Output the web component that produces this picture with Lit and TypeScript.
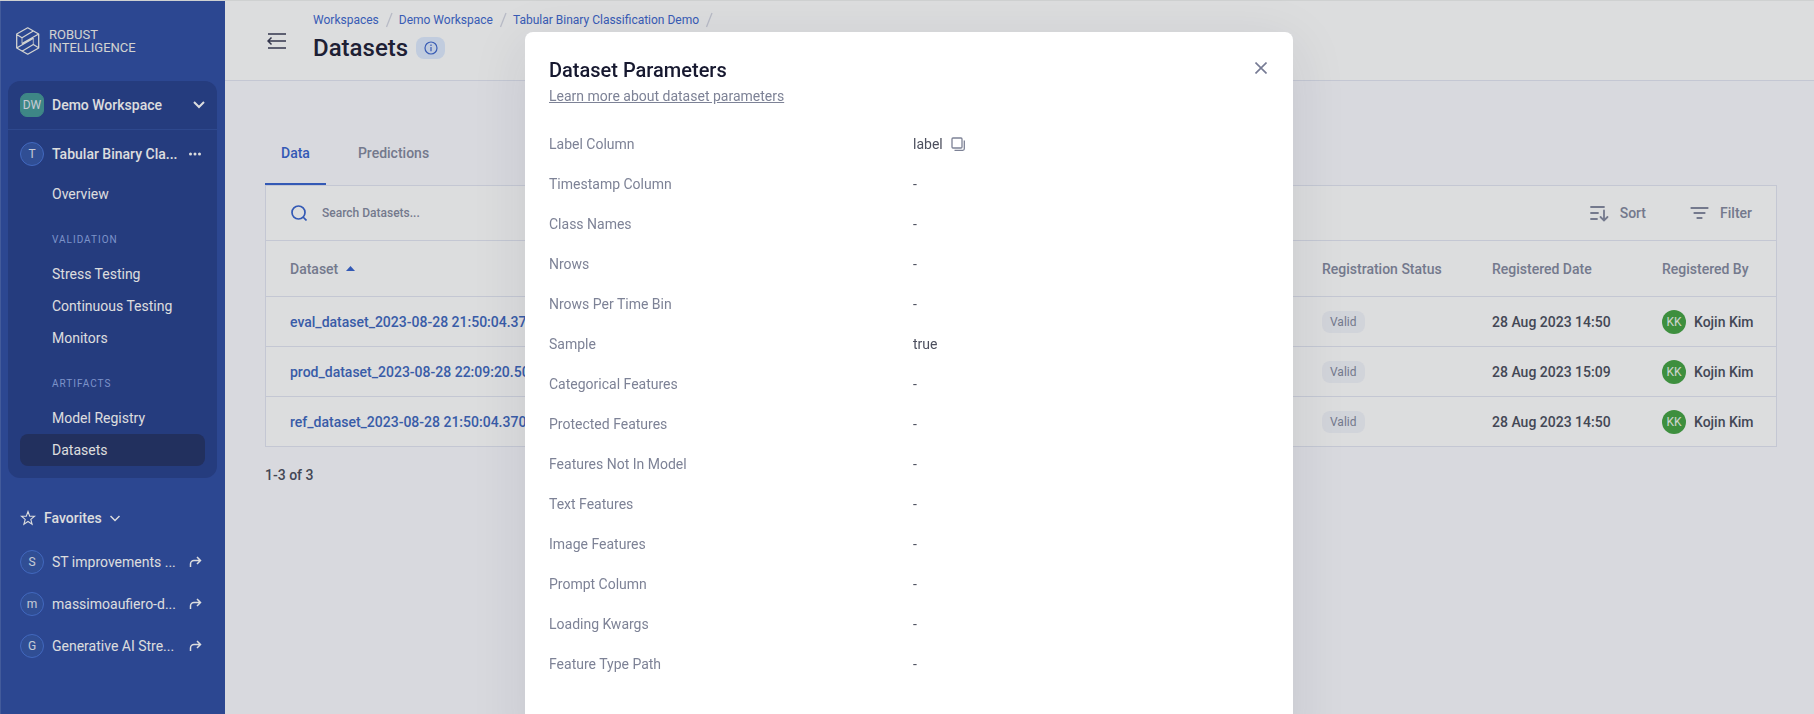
import { LitElement, html, css, svg } from "lit";
import { customElement } from "lit/decorators.js";
import { classMap } from "lit/directives/class-map.js";

const shared = css`
  * { box-sizing: border-box; }
  :host { box-sizing: border-box; font-family: Roboto, "Liberation Sans", sans-serif; font-size: 14px; line-height: 20px; }
  a { color: inherit; text-decoration: none; }
  button { font: inherit; color: inherit; background: none; border: 0; padding: 0; margin: 0; cursor: pointer; }
  svg { display: block; flex: none; fill: none; stroke: currentColor; }
  h1, h2, p, ul, dl, dd, dt { margin: 0; padding: 0; }
  ul { list-style: none; }
`;

const shareArrow = svg`<path d="M1.500 11V8a3.500 3.500 0 0 1 3.500-3.500h6M8 1l3.500 3.500L8 8" stroke-width="1.500"/>`;

@customElement("app-sidebar")
export class AppSidebar extends LitElement {
  static styles = [shared, css`
    :host { display: block; flex: none; width: 225px; min-height: 100%; padding: 0 8px 0 7px; background: #314fa5; border-left: 1px solid #4c67b1; color: #fff; }
    .brand { display: flex; align-items: center; gap: 9px; height: 80px; padding: 0 8px; font-size: 13px; line-height: 13px; color: #f4f4f0; }
    .panel { background: #29428f; border-radius: 12px; padding-bottom: 12px; }
    .row { display: flex; align-items: center; width: 100%; height: 48px; padding: 0 12px; text-align: left; font-weight: 500; }
    .workspace { height: 49px; border-bottom: 1px solid #3350a0; }
    .name { flex: 1; padding-left: 8px; white-space: nowrap; }
    .avatar { flex: none; display: grid; place-items: center; width: 24px; height: 24px; border: 1px solid #4a76da; border-radius: 12px; background: #3558a9; font-size: 12px; font-weight: 400; line-height: 16px; color: #e4e9f4; }
    .square { border-radius: 7px; border-color: #469b98; background: #469b98; }
    .link { display: flex; align-items: center; height: 32px; margin: 0 12px; padding-left: 32px; border-radius: 8px; }
    .active { background: #253469; }
    .label { padding: 22px 0 10px 44px; font-size: 10px; line-height: 16px; letter-spacing: 1px; font-weight: 400; color: #8fa9e6; }
    .favhead { display: flex; align-items: center; gap: 8px; padding: 0 12px; height: 24px; margin-top: 28px; font-weight: 500; }
    .favs { display: grid; gap: 18px; margin-top: 20px; }
    .fav { display: flex; align-items: center; padding: 0 15px 0 12px; }
  `];

  private link(text: string, active = false) {
    return html`<a href="#" class=${classMap({ link: true, active })}>${text}</a>`;
  }

  private favorite(initial: string, text: string) {
    return html`<li><a href="#" class="fav"><span class="avatar">${initial}</span><span class="name">${text}</span>
      <svg width="13" height="12" viewBox="0 0 13 12">${shareArrow}</svg></a></li>`;
  }

  render() {
    return html`
      <div class="brand">
        <svg width="24" height="28" viewBox="0 0 24 28" stroke-width="1.300" stroke-linejoin="round">
          <path d="M11.700 .8 22.700 7v14L11.700 27.200.7 21V7ZM.7 7.500l5.300 3.200L17.300 4M22.700 7 6 16.500M.7 21l16.800-9.700M6 24.200l11.300-6.700 5.400 3.200"/>
          <path d="M6 10.700v5.800M17.400 11.300v6.200" opacity=".6"/>
        </svg>
        <span>ROBUST<br>INTELLIGENCE</span>
      </div>
      <nav class="panel">
        <button class="row workspace"><span class="avatar square">DW</span><span class="name">Demo Workspace</span>
          <svg width="12" height="8" viewBox="0 0 12 8" stroke-width="2"><path d="m1 1 5 5 5-5"/></svg></button>
        <button class="row"><span class="avatar">T</span><span class="name">Tabular Binary Cla...</span>
          <svg width="16" height="4" viewBox="0 0 16 4"><g fill="currentColor" stroke="none"><circle cx="1.500" cy="2" r="1.500"/><circle cx="6" cy="2" r="1.500"/><circle cx="10.500" cy="2" r="1.500"/></g></svg></button>
        ${this.link("Overview")}
        <h2 class="label">VALIDATION</h2>
        ${this.link("Stress Testing")}${this.link("Continuous Testing")}${this.link("Monitors")}
        <h2 class="label">ARTIFACTS</h2>
        ${this.link("Model Registry")}${this.link("Datasets", true)}
      </nav>
      <button class="favhead">
        <svg width="16" height="16" viewBox="0 0 16 16" stroke-width="1.100"><path d="m8 1.500 1.700 4.600 4.900.2-3.800 3.100 1.300 4.800L8 11.500l-4.100 2.700 1.300-4.800L1.400 6.300l4.900-.2Z"/></svg>
        Favorites
        <svg width="10" height="7" viewBox="0 0 10 7" stroke-width="1.500"><path d="m.5 1 4.500 4.500L9.500 1"/></svg>
      </button>
      <ul class="favs">
        ${this.favorite("S", "ST improvements ...")}
        ${this.favorite("m", "massimoaufiero-d...")}
        ${this.favorite("G", "Generative AI Stre...")}
      </ul>`;
  }
}

const datasets = [
  { name: "eval_dataset_2023-08-28 21:50:04.370", date: "28 Aug 2023 14:50" },
  { name: "prod_dataset_2023-08-28 22:09:20.508", date: "28 Aug 2023 15:09" },
  { name: "ref_dataset_2023-08-28 21:50:04.3704", date: "28 Aug 2023 14:50" },
];

@customElement("datasets-page")
export class DatasetsPage extends LitElement {
  static styles = [shared, css`
    :host { display: block; flex: 1; min-width: 0; background: #fbfbff; color: #4c4f5e; font-weight: 500; }
    .header { display: flex; align-items: center; height: 80px; padding: 0 42px; background: #fff; border-bottom: 1px solid #e3e6f2; }
    .menu { margin: 0 27px 0 0; color: #3a3b55; }
    .titles { padding-bottom: 5px; }
    .crumbs { display: flex; align-items: center; gap: 6px; font-size: 12px; line-height: 16px; font-weight: 400; color: #4068cf; }
    .crumbs svg { color: #d5d7e3; }
    .title { display: flex; align-items: center; gap: 8px; margin-top: 4px; }
    h1 { font-size: 24px; line-height: 32px; font-weight: 500; color: #1f2138; }
    .info { display: grid; place-items: center; width: 29px; height: 22px; border-radius: 8px; background: #e0ecff; color: #4068cf; }
    .content { padding: 48px 37px 32px 40px; }
    .tabs { display: flex; gap: 16px; }
    .tab { height: 56px; padding: 0 16px 6px; border-bottom: 2px solid transparent; font-weight: 500; color: #858aa0; }
    .selected { color: #3964cf; border-color: #3964cf; }
    .card { background: #fff; border: 1px solid #e3e6f2; }
    .toolbar { display: flex; align-items: center; height: 55px; padding: 0 24px 0 25px; border-bottom: 1px solid #e3e6f2; color: #858aa0; }
    .search { display: flex; flex: 1; align-items: center; gap: 15px; color: #3964cf; }
    .search input { flex: 1; border: 0; outline: 0; padding: 0; background: none; font: 500 12px/16px Roboto, sans-serif; color: #4c4f5e; }
    .search input::placeholder { color: #858aa0; opacity: 1; }
    .tool { display: flex; align-items: center; gap: 11px; margin-left: 44px; font-weight: 500; }
    table { width: 100%; border-collapse: separate; border-spacing: 0; table-layout: fixed; }
    th, td { padding: 0 0 0 24px; text-align: left; white-space: nowrap; font-weight: 500; }
    th { height: 55px; color: #858aa0; }
    td { height: 50px; border-top: 1px solid #e3e6f2; }
    .status, .date { width: 170px; }
    .owner { width: 138px; }
    .sort { display: flex; align-items: center; gap: 8px; font-weight: 500; }
    .sort svg { color: #3964cf; }
    .name { color: #4068c0; }
    .chip { display: inline-block; padding: 3px 8px; border-radius: 8px; background: #f3f5fb; font-size: 12px; line-height: 16px; font-weight: 400; color: #858aa0; }
    .person { display: flex; align-items: center; gap: 8px; }
    .avatar { display: grid; place-items: center; width: 24px; height: 24px; border-radius: 50%; background: #45a444; color: #eef6ee; font-size: 12px; font-weight: 400; }
    .count { margin-top: 18px; }
  `];

  private slash() {
    return html`<svg width="8" height="16" viewBox="0 0 8 16" stroke-width="1.300"><path d="M7 1 1.500 15"/></svg>`;
  }

  render() {
    return html`
      <header class="header">
        <button class="menu" aria-label="Collapse menu">
          <svg width="19" height="18" viewBox="0 0 19 18" stroke-width="1.500"><path d="M1 2h18M2 9h17M1 16h18M4.500 5.500 1 9l3.500 3.500"/></svg>
        </button>
        <div class="titles">
          <nav class="crumbs">
            <a href="#">Workspaces</a>${this.slash()}<a href="#">Demo Workspace</a>${this.slash()}<a href="#">Tabular Binary Classification Demo</a>${this.slash()}
          </nav>
          <div class="title">
            <h1>Datasets</h1>
            <button class="info" aria-label="About datasets">
              <svg width="14" height="14" viewBox="0 0 14 14" stroke-width="1.200"><circle cx="7" cy="7" r="6"/><path d="M7 6v4.200M7 3.600v1.400"/></svg>
            </button>
          </div>
        </div>
      </header>
      <main class="content">
        <div class="tabs" role="tablist">
          <button class="tab selected" role="tab" aria-selected="true">Data</button>
          <button class="tab" role="tab" aria-selected="false">Predictions</button>
        </div>
        <section class="card">
          <div class="toolbar">
            <label class="search">
              <svg width="16" height="16" viewBox="0 0 16 16" stroke-width="1.700"><circle cx="7.500" cy="7.500" r="6.500"/><path d="m12 12 3.500 3.500"/></svg>
              <input type="search" placeholder="Search Datasets..." aria-label="Search datasets">
            </label>
            <button class="tool">
              <svg width="19" height="17" viewBox="0 0 19 17" stroke-width="1.800" stroke-linecap="round"><path d="M1 2h13M1 8h7M1 14h6M14 5.500v10M10.500 12l3.500 3.500 3.500-3.500"/></svg>Sort</button>
            <button class="tool">
              <svg width="19" height="14" viewBox="0 0 19 14" stroke-width="1.800" stroke-linecap="round"><path d="M1.300 2h16.400M4.300 7h10.400M7.300 12h4.400"/></svg>Filter</button>
          </div>
          <table>
            <thead><tr>
              <th><button class="sort">Dataset <svg width="9" height="5" viewBox="0 0 9 5"><path d="M0 5 4.500 0 9 5Z" fill="currentColor" stroke="none"/></svg></button></th>
              <th class="status">Registration Status</th>
              <th class="date">Registered Date</th>
              <th class="owner">Registered By</th>
            </tr></thead>
            <tbody>
              ${datasets.map(d => html`<tr>
                <td><a class="name" href="#">${d.name}</a></td>
                <td><span class="chip">Valid</span></td>
                <td>${d.date}</td>
                <td><span class="person"><span class="avatar">KK</span>Kojin Kim</span></td>
              </tr>`)}
            </tbody>
          </table>
        </section>
        <p class="count">1-3 of 3</p>
      </main>`;
  }
}

const parameters: [string, string][] = [
  ["Label Column", "label"], ["Timestamp Column", "-"], ["Class Names", "-"], ["Nrows", "-"],
  ["Nrows Per Time Bin", "-"], ["Sample", "true"], ["Categorical Features", "-"], ["Protected Features", "-"],
  ["Features Not In Model", "-"], ["Text Features", "-"], ["Image Features", "-"], ["Prompt Column", "-"],
  ["Loading Kwargs", "-"], ["Feature Type Path", "-"],
];

@customElement("parameters-dialog")
export class ParametersDialog extends LitElement {
  static styles = [shared, css`
    :host { position: fixed; inset: 0; display: flex; align-items: flex-start; justify-content: center; padding: 32px 0 0 4px; overflow: hidden; background: rgba(22, 26, 36, 0.15); }
    .dialog { width: 768px; max-width: 100%; padding: 24px 24px 64px; background: #fff; border-radius: 8px; box-shadow: 0 12px 56px rgba(30, 34, 60, 0.1); color: #4c4f5e; }
    .head { display: flex; justify-content: space-between; align-items: flex-start; }
    h2 { font-size: 20px; line-height: 28px; font-weight: 500; color: #16182f; }
    .learn { display: inline-block; margin-top: 2px; color: #7d8296; text-decoration: underline; }
    .close { padding: 6px 2px; color: #767b94; }
    .list { margin-top: 18px; }
    .item { display: grid; grid-template-columns: 1fr 1fr; gap: 8px; align-items: center; height: 40px; }
    dt { color: #7d8296; }
    dd { display: flex; align-items: center; gap: 8px; }
    .copy { color: #7d8296; }
  `];

  render() {
    return html`
      <section class="dialog" role="dialog" aria-modal="true" aria-labelledby="heading">
        <div class="head">
          <div>
            <h2 id="heading">Dataset Parameters</h2>
            <a class="learn" href="#">Learn more about dataset parameters</a>
          </div>
          <button class="close" aria-label="Close"><svg width="12" height="12" viewBox="0 0 12 12" stroke-width="1.600"><path d="m.5.5 11 11M11.500.5.5 11.500"/></svg></button>
        </div>
        <dl class="list">
          ${parameters.map(([name, value]) => html`<div class="item">
            <dt>${name}</dt>
            <dd>${value}${value === "label" ? html`<button class="copy" aria-label="Copy label">
              <svg width="14" height="14" viewBox="0 0 14 14" stroke-width="1.300"><rect x="1" y="1" width="10" height="10" rx="1"/><path d="M13.300 3.500v8.300a1.500 1.500 0 0 1-1.500 1.500H3.500"/></svg></button>` : ""}</dd>
          </div>`)}
        </dl>
      </section>`;
  }
}

@customElement("app-root")
export class AppRoot extends LitElement {
  static styles = css`
    :host { display: block; }
    .shell { display: flex; box-sizing: border-box; min-height: 100vh; border-top: 1px solid #f0f1f0; }
  `;

  render() {
    return html`
      <div class="shell"><app-sidebar></app-sidebar><datasets-page></datasets-page></div>
      <parameters-dialog></parameters-dialog>`;
  }
}
